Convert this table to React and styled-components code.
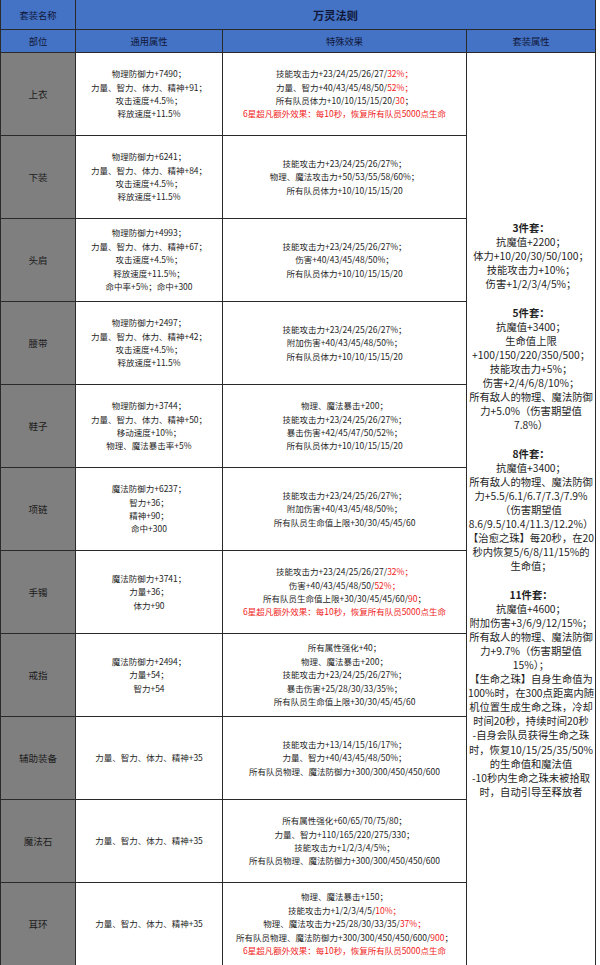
import React from "react";
import styled, { createGlobalStyle } from "styled-components";

const GlobalStyle = createGlobalStyle`
  html, body { margin: 0; padding: 0; background: #ffffff; }
  body { font-family: "Noto Sans CJK SC", "Noto Sans", sans-serif; color: #222; }
`;

const Table = styled.div`
  display: grid;
  width: 596px;
  grid-template-columns: 74px 146px 243px 128px;
  grid-template-rows: 29px 22px repeat(11, 82px);
  gap: 1px;
  background: #2a2a2a;
  border: 1px solid #2a2a2a;
  border-top: none;
  box-sizing: border-box;
  width: 596px;
`;

const HeaderCell = styled.div`
  background: #4472c4;
  display: flex;
  align-items: center;
  justify-content: center;
  color: #10183a;
  font-size: ${(p) => (p.$title ? "11.2px" : "9.3px")};
  font-weight: ${(p) => (p.$title ? 700 : 400)};
  grid-column: ${(p) => p.$span || "auto"};
  white-space: nowrap;
`;

const PartCell = styled.div`
  background: #7f7f7f;
  display: flex;
  align-items: center;
  justify-content: center;
  font-size: 9.5px;
  color: #1c1c1c;
`;

const AttrCell = styled.div`
  background: #ffffff;
  display: flex;
  flex-direction: column;
  align-items: center;
  justify-content: center;
  font-size: 8.5px;
  line-height: 13.4px;
  color: #262626;
  overflow: hidden;
`;

const Line = styled.div`
  white-space: nowrap;
  color: ${(p) => (p.$red ? "#f01c1c" : "inherit")};
`;

const Red = styled.span`
  color: #f01c1c;
`;

const SetCell = styled.div`
  grid-column: 4;
  grid-row: 3 / 14;
  background: #ffffff;
  display: flex;
  flex-direction: column;
  align-items: center;
  justify-content: center;
  font-size: 10.3px;
  line-height: 14.1px;
  color: #1e1e1e;
  overflow: hidden;
  padding-top: 2px;
`;

const SetLine = styled.div`
  white-space: nowrap;
  font-weight: ${(p) => (p.$bold ? 700 : 400)};
  height: 14.1px;
`;

function renderLine(text, key) {
  if (text.startsWith("!")) {
    return (
      <Line key={key} $red>
        {text.slice(1)}
      </Line>
    );
  }
  const parts = text.split(/(\{[^}]*\})/);
  return (
    <Line key={key}>
      {parts.map((p, i) =>
        p.startsWith("{") ? <Red key={i}>{p.slice(1, -1)}</Red> : <React.Fragment key={i}>{p}</React.Fragment>
      )}
    </Line>
  );
}

const RED6 = "!6星超凡额外效果：每10秒，恢复所有队员5000点生命";

const rows = [
  {
    part: "上衣",
    base: ["物理防御力+7490；", "力量、智力、体力、精神+91；", "攻击速度+4.5%；", "释放速度+11.5%"],
    special: [
      "技能攻击力+23/24/25/26/27/{32%；}",
      "力量、智力+40/43/45/48/50/{52%；}",
      "所有队员体力+10/10/15/15/20/{30}；",
      RED6,
    ],
  },
  {
    part: "下装",
    base: ["物理防御力+6241；", "力量、智力、体力、精神+84；", "攻击速度+4.5%；", "释放速度+11.5%"],
    special: ["技能攻击力+23/24/25/26/27%；", "物理、魔法攻击力+50/53/55/58/60%；", "所有队员体力+10/10/15/15/20"],
  },
  {
    part: "头肩",
    base: ["物理防御力+4993；", "力量、智力、体力、精神+67；", "攻击速度+4.5%；", "释放速度+11.5%；", "命中率+5%；命中+300"],
    special: ["技能攻击力+23/24/25/26/27%；", "伤害+40/43/45/48/50%；", "所有队员体力+10/10/15/15/20"],
  },
  {
    part: "腰带",
    base: ["物理防御力+2497；", "力量、智力、体力、精神+42；", "攻击速度+4.5%；", "释放速度+11.5%"],
    special: ["技能攻击力+23/24/25/26/27%；", "附加伤害+40/43/45/48/50%；", "所有队员体力+10/10/15/15/20"],
  },
  {
    part: "鞋子",
    base: ["物理防御力+3744；", "力量、智力、体力、精神+50；", "移动速度+10%；", "物理、魔法暴击率+5%"],
    special: ["物理、魔法暴击+200；", "技能攻击力+23/24/25/26/27%；", "暴击伤害+42/45/47/50/52%；", "所有队员体力+10/10/15/15/20"],
  },
  {
    part: "项链",
    base: ["魔法防御力+6237；", "智力+36；", "精神+90；", "命中+300"],
    special: ["技能攻击力+23/24/25/26/27%；", "附加伤害+40/43/45/48/50%；", "所有队员生命值上限+30/30/45/45/60"],
  },
  {
    part: "手镯",
    base: ["魔法防御力+3741；", "力量+36；", "体力+90"],
    special: [
      "技能攻击力+23/24/25/26/27/{32%；}",
      "伤害+40/43/45/48/50/{52%；}",
      "所有队员生命值上限+30/30/45/45/60/{90}；",
      RED6,
    ],
  },
  {
    part: "戒指",
    base: ["魔法防御力+2494；", "力量+54；", "智力+54"],
    special: [
      "所有属性强化+40；",
      "物理、魔法暴击+200；",
      "技能攻击力+23/24/25/26/27%；",
      "暴击伤害+25/28/30/33/35%；",
      "所有队员生命值上限+30/30/45/45/60",
    ],
  },
  {
    part: "辅助装备",
    base: ["力量、智力、体力、精神+35"],
    special: ["技能攻击力+13/14/15/16/17%；", "力量、智力+40/43/45/48/50%；", "所有队员物理、魔法防御力+300/300/450/450/600"],
  },
  {
    part: "魔法石",
    base: ["力量、智力、体力、精神+35"],
    special: [
      "所有属性强化+60/65/70/75/80；",
      "力量、智力+110/165/220/275/330；",
      "技能攻击力+1/2/3/4/5%；",
      "所有队员物理、魔法防御力+300/300/450/450/600",
    ],
  },
  {
    part: "耳环",
    base: ["力量、智力、体力、精神+35"],
    special: [
      "物理、魔法暴击+150；",
      "技能攻击力+1/2/3/4/5/{10%；}",
      "物理、魔法攻击力+25/28/30/33/35/{37%；}",
      "所有队员物理、魔法防御力+300/300/450/450/600/{900}；",
      RED6,
    ],
  },
];

const setLines = [
  "*3件套：",
  "抗魔值+2200；",
  "体力+10/20/30/50/100；",
  "技能攻击力+10%；",
  "伤害+1/2/3/4/5%；",
  "",
  "*5件套：",
  "抗魔值+3400；",
  "生命值上限",
  "+100/150/220/350/500；",
  "技能攻击力+5%；",
  "伤害+2/4/6/8/10%；",
  "所有敌人的物理、魔法防御",
  "力+5.0%（伤害期望值",
  "7.8%）",
  "",
  "*8件套：",
  "抗魔值+3400；",
  "所有敌人的物理、魔法防御",
  "力+5.5/6.1/6.7/7.3/7.9%",
  "（伤害期望值",
  "8.6/9.5/10.4/11.3/12.2%）",
  "【治愈之珠】每20秒，在20",
  "秒内恢复5/6/8/11/15%的",
  "生命值；",
  "",
  "*11件套：",
  "抗魔值+4600；",
  "附加伤害+3/6/9/12/15%；",
  "所有敌人的物理、魔法防御",
  "力+9.7%（伤害期望值",
  "15%）；",
  "【生命之珠】自身生命值为",
  "100%时，在300点距离内随",
  "机位置生成生命之珠，冷却",
  "时间20秒，持续时间20秒",
  "-自身会队员获得生命之珠",
  "时，恢复10/15/25/35/50%",
  "的生命值和魔法值",
  "-10秒内生命之珠未被拾取",
  "时，自动引导至释放者",
];

export default function App() {
  return (
    <>
      <GlobalStyle />
      <Table>
        <HeaderCell>套装名称</HeaderCell>
        <HeaderCell $title $span="2 / 5">
          万灵法则
        </HeaderCell>
        <HeaderCell>部位</HeaderCell>
        <HeaderCell>通用属性</HeaderCell>
        <HeaderCell>特殊效果</HeaderCell>
        <HeaderCell>套装属性</HeaderCell>
        {rows.map((row, idx) => (
          <React.Fragment key={row.part}>
            <PartCell style={{ gridRow: idx + 3 }}>{row.part}</PartCell>
            <AttrCell style={{ gridRow: idx + 3 }}>{row.base.map((t, i) => renderLine(t, i))}</AttrCell>
            <AttrCell style={{ gridRow: idx + 3 }}>{row.special.map((t, i) => renderLine(t, i))}</AttrCell>
          </React.Fragment>
        ))}
        <SetCell>
          {setLines.map((t, i) =>
            t.startsWith("*") ? (
              <SetLine key={i} $bold>
                {t.slice(1)}
              </SetLine>
            ) : (
              <SetLine key={i}>{t}</SetLine>
            )
          )}
        </SetCell>
      </Table>
    </>
  );
}
